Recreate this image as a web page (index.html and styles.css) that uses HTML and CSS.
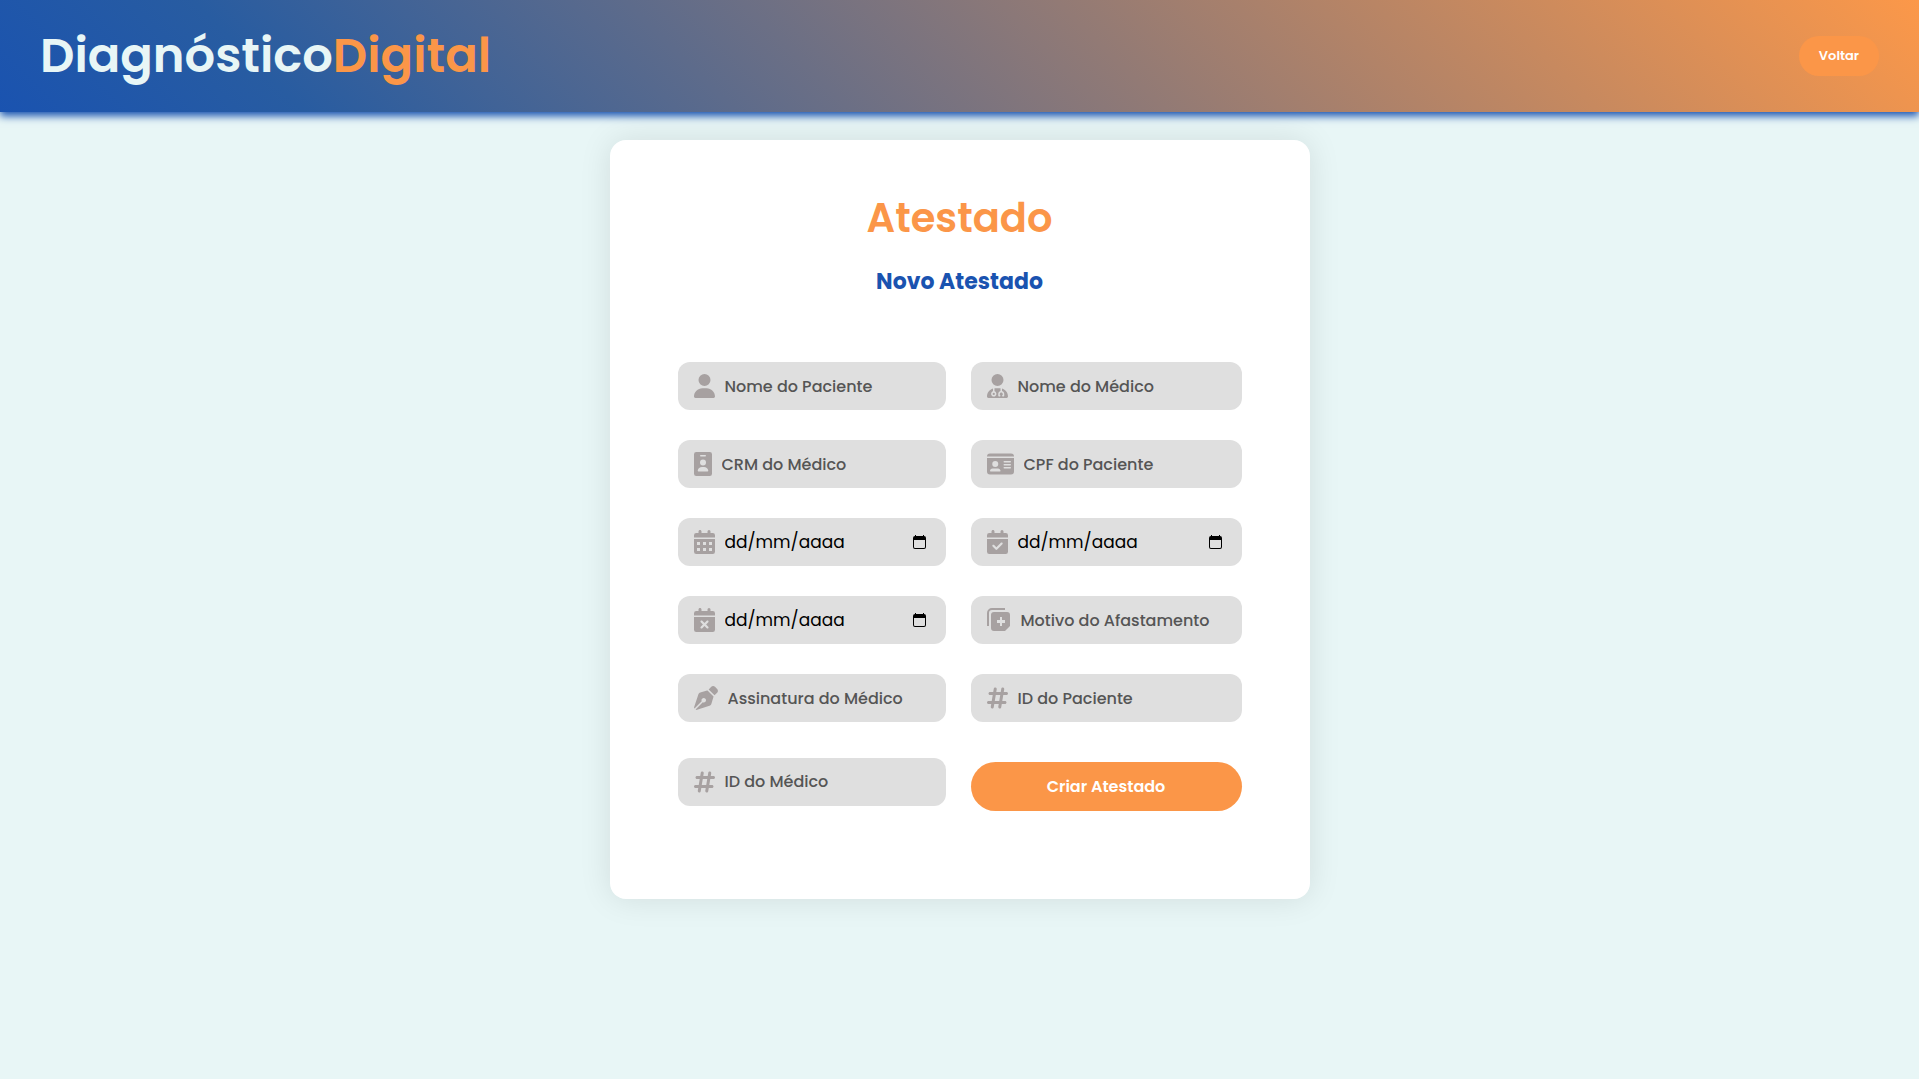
FILE: index.html
```html
<!DOCTYPE html>
<html lang="pt-BR">
<head>
<meta charset="utf-8">
<meta name="viewport" content="width=device-width, initial-scale=1">
<title>Diagnóstico Digital</title>
<link rel="stylesheet" href="styles.css">
</head>
<body>
<header class="topbar">
  <a class="logo" href="#">Diagnóstico<span class="logo-accent">Digital</span></a>
  <button class="back" type="button">Voltar</button>
</header>
<main class="page">
  <section class="card">
    <h1 class="title">Atestado</h1>
    <h2 class="subtitle">Novo Atestado</h2>
    <form class="form">
      <label class="field">
        <svg class="icon" viewBox="0 0 448 512" width="21" height="24"><path d="M224 256A128 128 0 1 0 224 0a128 128 0 1 0 0 256zm-45.700 48C79.800 304 0 383.800 0 482.300C0 498.700 13.300 512 29.700 512h388.600c16.400 0 29.700-13.300 29.700-29.700C448 383.800 368.200 304 269.700 304h-91.400z"/></svg>
        <input class="input" type="text" placeholder="Nome do Paciente" aria-label="Nome do Paciente">
      </label>
      <label class="field">
        <svg class="icon" viewBox="0 0 448 512" width="21" height="24"><path d="M224 256A128 128 0 1 0 224 0a128 128 0 1 0 0 256zm-96 55.200C54 332.900 0 401.300 0 482.300C0 498.700 13.300 512 29.700 512H418.300c16.400 0 29.700-13.300 29.700-29.700c0-81-54-149.400-128-171.100V362c27.600 7.100 48 32.200 48 62v40c0 8.800-7.200 16-16 16H336c-8.800 0-16-7.200-16-16s7.200-16 16-16V424c0-17.700-14.300-32-32-32s-32 14.300-32 32v24c8.800 0 16 7.200 16 16s-7.200 16-16 16H256c-8.800 0-16-7.200-16-16V424c0-29.800 20.400-54.900 48-62V304.900c-6-.6-12.100-.9-18.300-.9H178.300c-6.200 0-12.300 .3-18.300 .9v65.400c23.100 6.900 40 28.300 40 53.700c0 30.900-25.100 56-56 56s-56-25.100-56-56c0-25.400 16.900-46.800 40-53.700V311.200zM144 448a24 24 0 1 0 0-48 24 24 0 1 0 0 48z"/></svg>
        <input class="input" type="text" placeholder="Nome do Médico" aria-label="Nome do Médico">
      </label>
      <label class="field">
        <svg class="icon" viewBox="0 0 384 512" width="18" height="24"><path fill-rule="evenodd" d="M48 0h288a48 48 0 0 1 48 48v416a48 48 0 0 1-48 48H48a48 48 0 0 1-48-48V48A48 48 0 0 1 48 0zm96 64a16 16 0 0 0 0 32h96a16 16 0 0 0 0-32zm48 96a64 64 0 1 0 0 128 64 64 0 1 0 0-128zm-22 160c-46 0-83 30-90 74-2 13 8 22 22 22h180c14 0 24-9 22-22-7-44-44-74-90-74z"/></svg>
        <input class="input" type="text" placeholder="CRM do Médico" aria-label="CRM do Médico">
      </label>
      <label class="field">
        <svg class="icon" viewBox="0 0 576 512" width="27" height="24"><path fill-rule="evenodd" d="M0 96a64 64 0 0 1 64-64h448a64 64 0 0 1 64 64zM0 128h576v288a64 64 0 0 1-64 64H64a64 64 0 0 1-64-64zm64 277c0 6 5 11 11 11h202c6 0 11-5 11-11 0-29-24-53-53-53H117c-29 0-53 24-53 53zm112-213a64 64 0 1 0 0 128 64 64 0 1 0 0-128zm192 0a16 16 0 0 0 0 32h128a16 16 0 0 0 0-32zm0 64a16 16 0 0 0 0 32h128a16 16 0 0 0 0-32zm0 64a16 16 0 0 0 0 32h128a16 16 0 0 0 0-32z"/></svg>
        <input class="input" type="text" placeholder="CPF do Paciente" aria-label="CPF do Paciente">
      </label>
      <div class="field">
        <svg class="icon" viewBox="0 0 448 512" width="21" height="24"><path fill-rule="evenodd" d="M128 0c17.700 0 32 14.300 32 32v32h128V32a32 32 0 0 1 64 0v32h48a48 48 0 0 1 48 48v48H0v-48a48 48 0 0 1 48-48h48V32c0-17.700 14.300-32 32-32zM0 192h448v272a48 48 0 0 1-48 48H48a48 48 0 0 1-48-48zm64 64v64h64v-64zm128 0v64h64v-64zm128 0v64h64v-64zM64 384v64h64v-64zm128 0v64h64v-64zm128 0v64h64v-64z"/></svg>
        <input class="input input-date" type="text" inputmode="numeric" placeholder="dd/mm/aaaa" aria-label="Data de emissão">
        <button class="picker" type="button" aria-label="Abrir calendário"><svg viewBox="0 0 13 14" width="13" height="14"><path fill-rule="evenodd" d="M2 0h1v1h7V0h1v1a2 2 0 0 1 2 2v9a2 2 0 0 1-2 2H2a2 2 0 0 1-2-2V3a2 2 0 0 1 2-2zM1 5v7a1 1 0 0 0 1 1h9a1 1 0 0 0 1-1V5z"/></svg></button>
      </div>
      <div class="field">
        <svg class="icon" viewBox="0 0 448 512" width="21" height="24"><path d="M128 0c17.700 0 32 14.300 32 32v32h128V32a32 32 0 0 1 64 0v32h48a48 48 0 0 1 48 48v48H0v-48a48 48 0 0 1 48-48h48V32c0-17.700 14.300-32 32-32zM0 192h448v272a48 48 0 0 1-48 48H48a48 48 0 0 1-48-48zM329 305c9.400-9.400 9.400-24.600 0-33.900s-24.600-9.400-33.900 0l-95 95-47-47c-9.400-9.400-24.600-9.400-33.900 0s-9.400 24.600 0 33.900l64 64c9.400 9.400 24.600 9.400 33.900 0z"/></svg>
        <input class="input input-date" type="text" inputmode="numeric" placeholder="dd/mm/aaaa" aria-label="Data de início">
        <button class="picker" type="button" aria-label="Abrir calendário"><svg viewBox="0 0 13 14" width="13" height="14"><path fill-rule="evenodd" d="M2 0h1v1h7V0h1v1a2 2 0 0 1 2 2v9a2 2 0 0 1-2 2H2a2 2 0 0 1-2-2V3a2 2 0 0 1 2-2zM1 5v7a1 1 0 0 0 1 1h9a1 1 0 0 0 1-1V5z"/></svg></button>
      </div>
      <div class="field">
        <svg class="icon" viewBox="0 0 448 512" width="21" height="24"><path d="M128 0c17.700 0 32 14.300 32 32v32h128V32a32 32 0 0 1 64 0v32h48a48 48 0 0 1 48 48v48H0v-48a48 48 0 0 1 48-48h48V32c0-17.700 14.300-32 32-32zM0 192h448v272a48 48 0 0 1-48 48H48a48 48 0 0 1-48-48zM305 305c9.400-9.400 9.400-24.600 0-33.900s-24.600-9.400-33.900 0l-47 47-47-47c-9.400-9.400-24.600-9.400-33.900 0s-9.400 24.600 0 33.900l47 47-47 47c-9.400 9.400-9.400 24.600 0 33.900s24.600 9.400 33.900 0l47-47 47 47c9.400 9.400 24.600 9.400 33.900 0s9.400-24.600 0-33.900l-47-47z"/></svg>
        <input class="input input-date" type="text" inputmode="numeric" placeholder="dd/mm/aaaa" aria-label="Data de término">
        <button class="picker" type="button" aria-label="Abrir calendário"><svg viewBox="0 0 13 14" width="13" height="14"><path fill-rule="evenodd" d="M2 0h1v1h7V0h1v1a2 2 0 0 1 2 2v9a2 2 0 0 1-2 2H2a2 2 0 0 1-2-2V3a2 2 0 0 1 2-2zM1 5v7a1 1 0 0 0 1 1h9a1 1 0 0 0 1-1V5z"/></svg></button>
      </div>
      <label class="field">
        <svg class="icon" viewBox="0 0 24 24" width="24" height="24"><path fill-rule="evenodd" d="M0 18V5a5 5 0 0 1 5-5h13v2H5a3 3 0 0 0-3 3v13zM7 4h13a3 3 0 0 1 3 3v11l-5 5H7a3 3 0 0 1-3-3V7a3 3 0 0 1 3-3zm6 5v3h-3v3h3v3h2v-3h3v-3h-3V9z"/></svg>
        <input class="input" type="text" placeholder="Motivo do Afastamento" aria-label="Motivo do Afastamento">
      </label>
      <label class="field">
        <svg class="icon" viewBox="0 0 512 512" width="24" height="24"><path d="M368.400 18.300L312.700 74.100 437.900 199.300l55.700-55.700c21.900-21.900 21.900-57.300 0-79.200L447.600 18.300c-21.900-21.900-57.300-21.900-79.200 0zM288 94.600l-9.200 2.800L134.700 140.600c-19.900 6-35.700 21.200-42.300 41L3.800 445.800c-3.800 11.300-1 23.900 7.300 32.400L164.700 324.700c-3-6.300-4.700-13.300-4.700-20.700c0-26.500 21.500-48 48-48s48 21.500 48 48s-21.500 48-48 48c-7.400 0-14.400-1.700-20.700-4.700L33.700 500.900c8.600 8.300 21.100 11.200 32.400 7.300l264.300-88.600c19.700-6.600 35-22.400 41-42.300l43.200-144.100 2.800-9.200L288 94.600z"/></svg>
        <input class="input" type="text" placeholder="Assinatura do Médico" aria-label="Assinatura do Médico">
      </label>
      <label class="field">
        <svg class="icon" viewBox="0 0 448 512" width="21" height="24"><path d="M181.300 32.400c17.400 2.900 29.200 19.400 26.300 36.800L197.800 128l95.100 0 11.500-69.300c2.900-17.400 19.400-29.200 36.800-26.300s29.200 19.400 26.300 36.800L357.800 128l58.200 0c17.700 0 32 14.300 32 32s-14.300 32-32 32l-68.900 0L325.800 320l58.200 0c17.700 0 32 14.300 32 32s-14.300 32-32 32l-68.900 0-11.500 69.300c-2.900 17.400-19.400 29.200-36.800 26.300s-29.200-19.400-26.300-36.800l9.800-58.700-95.100 0-11.500 69.300c-2.900 17.400-19.400 29.200-36.800 26.300s-29.200-19.400-26.300-36.800L90.200 384 32 384c-17.700 0-32-14.300-32-32s14.300-32 32-32l68.900 0 21.300-128L64 192c-17.700 0-32-14.300-32-32s14.300-32 32-32l68.900 0 11.500-69.300c2.900-17.400 19.400-29.200 36.800-26.300zM187.100 192L165.800 320l95.100 0 21.300-128-95.100 0z"/></svg>
        <input class="input" type="text" placeholder="ID do Paciente" aria-label="ID do Paciente">
      </label>
      <label class="field">
        <svg class="icon" viewBox="0 0 448 512" width="21" height="24"><path d="M181.300 32.400c17.400 2.900 29.200 19.400 26.300 36.800L197.800 128l95.100 0 11.500-69.300c2.900-17.400 19.400-29.200 36.800-26.300s29.200 19.400 26.300 36.800L357.800 128l58.200 0c17.700 0 32 14.300 32 32s-14.300 32-32 32l-68.900 0L325.800 320l58.200 0c17.700 0 32 14.300 32 32s-14.300 32-32 32l-68.900 0-11.500 69.300c-2.900 17.400-19.400 29.200-36.800 26.300s-29.200-19.400-26.300-36.800l9.800-58.700-95.100 0-11.500 69.300c-2.900 17.400-19.400 29.200-36.800 26.300s-29.200-19.400-26.300-36.800L90.200 384 32 384c-17.700 0-32-14.300-32-32s14.300-32 32-32l68.900 0 21.300-128L64 192c-17.700 0-32-14.300-32-32s14.300-32 32-32l68.900 0 11.500-69.300c2.900-17.400 19.400-29.200 36.800-26.300zM187.100 192L165.800 320l95.100 0 21.300-128-95.100 0z"/></svg>
        <input class="input" type="text" placeholder="ID do Médico" aria-label="ID do Médico">
      </label>
      <button class="submit" type="submit">Criar Atestado</button>
    </form>
  </section>
</main>
</body>
</html>
```

FILE: styles.css
```css
* {
  box-sizing: border-box;
}

body {
  margin: 0;
  min-height: 100vh;
  background: #e8f6f6;
  font-family: Poppins, Inter, "Open Sans", sans-serif;
}

input,
button {
  font: inherit;
  border: 0;
}

.topbar {
  display: flex;
  align-items: center;
  justify-content: space-between;
  padding: 20px 40px;
  background: linear-gradient(45deg, #1a53b0, #285ca1 15%, #fc9849);
  box-shadow: 0 4px 8px #1a53b0;
}

.logo {
  font-size: 48px;
  font-weight: 600;
  line-height: 72px;
  color: #e8f6f6;
  text-decoration: none;
}

.logo-accent {
  color: #fb9648;
}

.back {
  width: 80px;
  height: 40px;
  padding: 0;
  border-radius: 20px;
  background: #fb9648;
  color: #fff;
  font-size: 13px;
  font-weight: 600;
}

.page {
  padding: 28px 20px;
}

.card {
  max-width: 700px;
  margin: 0 auto;
  padding: 48px 68px 88px;
  border-radius: 16px;
  background: #fff;
  box-shadow: 0 0 32px rgba(0, 0, 0, 0.1);
}

.title {
  margin: 0;
  color: #fb9648;
  font-size: 40px;
  font-weight: 600;
  line-height: 60px;
  text-align: center;
}

.subtitle {
  margin: 16px 0 62px;
  color: #1a53b0;
  font-size: 22px;
  font-weight: 700;
  line-height: 36px;
  text-align: center;
}

.form {
  display: grid;
  grid-template-columns: minmax(0, 268fr) minmax(0, 271fr);
  align-items: center;
  gap: 30px 25px;
}

.field {
  display: flex;
  align-items: center;
  gap: 10px;
  height: 48px;
  padding: 0 16px;
  border-radius: 12px;
  background: #dfdfdf;
}

.icon {
  flex: none;
  fill: #a7a1a1;
}

.input {
  flex: 1;
  min-width: 0;
  padding: 0;
  outline: 0;
  background: transparent;
  color: #000;
  font-size: 16px;
  font-weight: 500;
}

.input::placeholder {
  color: #555;
  opacity: 1;
}

.input-date {
  font-size: 17px;
  font-weight: 400;
}

.input-date::placeholder {
  color: #000;
}

.picker {
  display: flex;
  padding: 0 4px;
  background: transparent;
}

.submit {
  height: 49px;
  margin-top: 10px;
  border-radius: 25px;
  background: #fb9648;
  color: #fff;
  font-size: 16px;
  font-weight: 600;
}
```
